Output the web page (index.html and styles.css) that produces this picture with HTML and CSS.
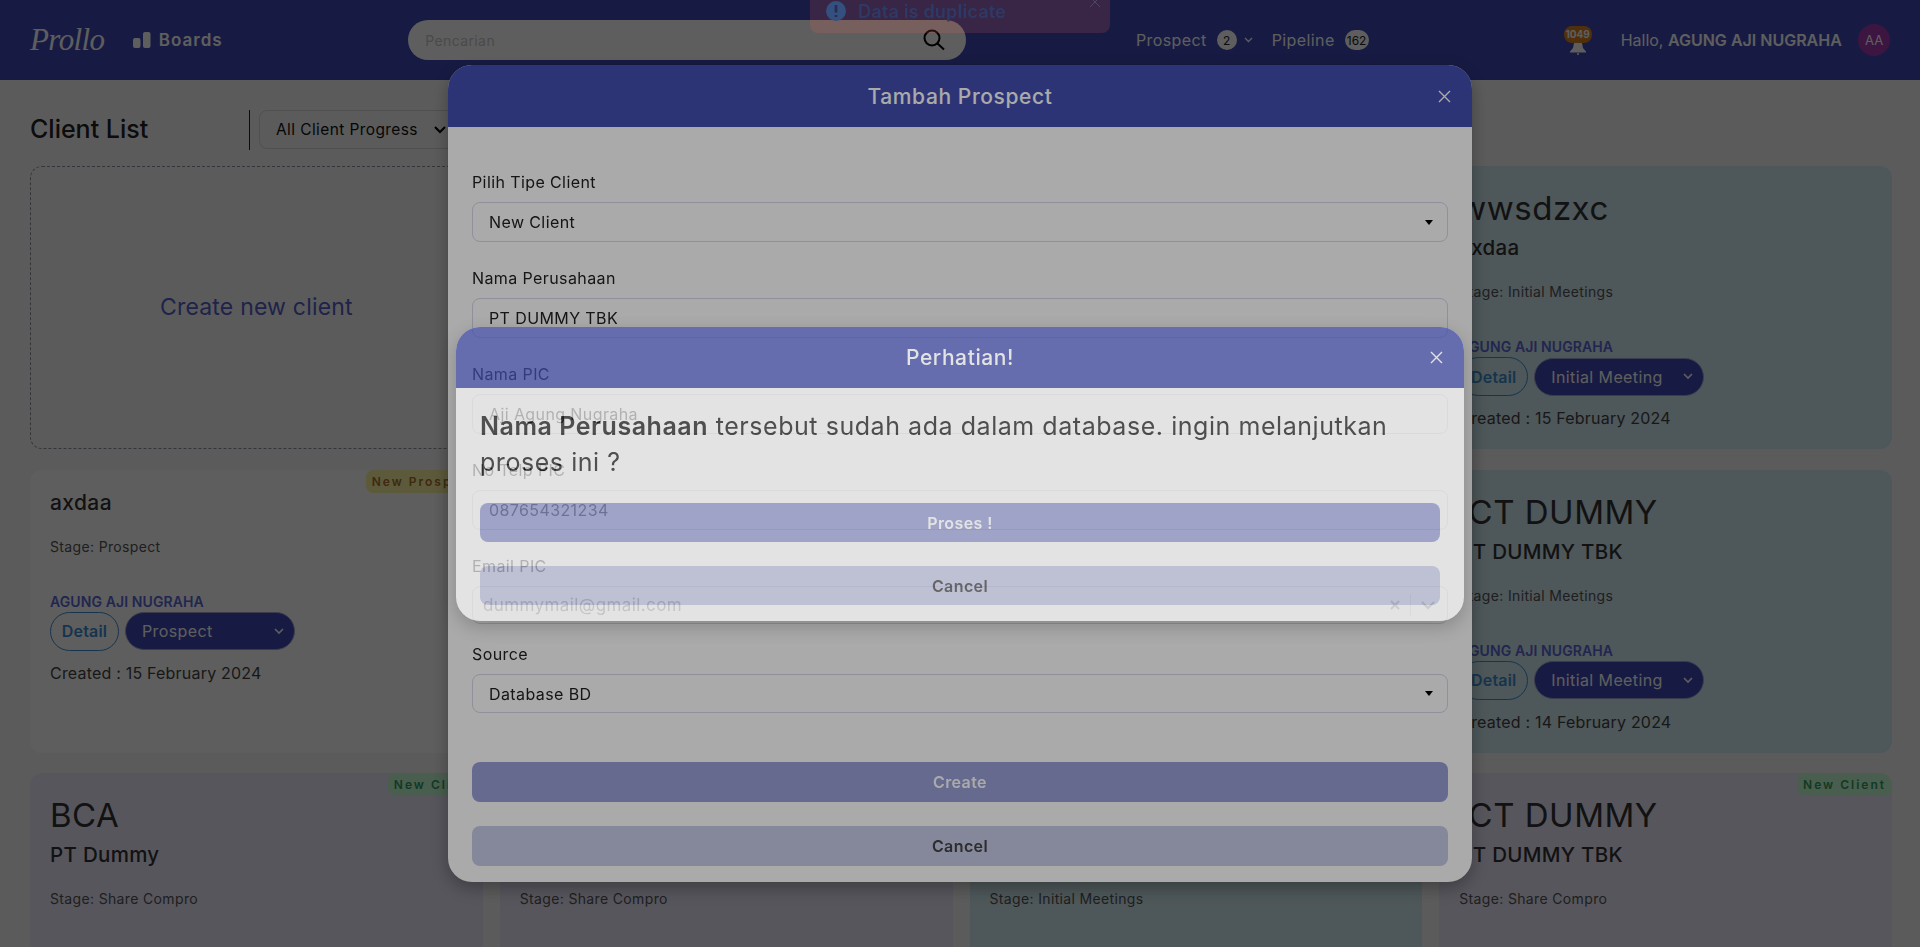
FILE: index.html

```html
<!DOCTYPE html>
<html lang="id">
<head>
	<meta charset="UTF-8">
	<title>Prollo - Client List</title>
	<link rel="stylesheet" href="styles.css">
</head>
<body>
	<nav class="navbar">
		<a class="logo">Prollo</a>
		<a class="nav_boards">
			<svg width="18" height="16" viewBox="0 0 18 16"><rect x="0" y="6" width="7.5" height="10" rx="2"/><rect x="10" y="0" width="7.5" height="16" rx="2"/></svg>
			Boards
		</a>
		<div class="search">
			<span class="search_text">Pencarian</span>
			<svg width="22" height="22" viewBox="0 0 22 22" fill="none" stroke="#000" stroke-width="2"><circle cx="9" cy="9" r="7.5"/><path d="M14.5 14.5 L21 20.5"/></svg>
		</div>
		<a class="nav_link">Prospect <span class="count">2</span>
			<svg class="nav_chev" width="9" height="6" viewBox="0 0 9 6" fill="none" stroke="#fff" stroke-width="1.3"><path d="M1 1 L4.5 4.5 L8 1"/></svg>
		</a>
		<a class="nav_link nav_pipeline">Pipeline <span class="count count_wide">162</span></a>
		<div class="bell">
			<span class="bell_count">1049</span>
			<svg width="18" height="12" viewBox="0 0 18 12" fill="#fff"><path d="M5 0 H13 L14 5 L17 8.5 V9.5 H1 V8.5 L4 5 Z"/><circle cx="9" cy="11" r="1"/></svg>
		</div>
		<div class="hello">Hallo, <b>AGUNG AJI NUGRAHA</b></div>
		<div class="avatar">AA</div>
	</nav>

	<main class="content">
		<div class="list_head">
			<h1 class="list_title">Client List</h1>
			<div class="filter">All Client Progress
				<svg width="12" height="8" viewBox="0 0 12 8" fill="none" stroke="#000" stroke-width="2"><path d="M1 1 L6 6 L11 1"/></svg>
			</div>
		</div>

		<div class="grid">
			<div class="card card_new">Create new client</div>
			<div class="card card_purple">
				<h2 class="card_title">BCA</h2>
				<h3 class="card_sub">PT Dummy</h3>
				<p class="card_stage">Stage: Share Compro</p>
			</div>
			<div class="card card_teal">
				<h2 class="card_title">ICT DUMMY</h2>
				<h3 class="card_sub">PT DUMMY TBK</h3>
				<p class="card_stage">Stage: Initial Meetings</p>
			</div>
			<div class="card card_teal">
				<h2 class="card_title">wwsdzxc</h2>
				<h3 class="card_sub">axdaa</h3>
				<p class="card_stage">Stage: Initial Meetings</p>
				<p class="card_owner">AGUNG AJI NUGRAHA</p>
				<div class="card_actions">
					<a class="btn_detail">Detail</a>
					<div class="stage_select">Initial Meeting
						<svg width="10" height="7" viewBox="0 0 10 7" fill="none" stroke="#fff" stroke-width="1.6"><path d="M1 1 L5 5 L9 1"/></svg>
					</div>
				</div>
				<p class="card_created">Created : 15 February 2024</p>
			</div>

			<div class="card card_plain">
				<span class="badge badge_prospect">New Prospect</span>
				<h3 class="card_name">axdaa</h3>
				<p class="card_stage">Stage: Prospect</p>
				<p class="card_owner">AGUNG AJI NUGRAHA</p>
				<div class="card_actions">
					<a class="btn_detail">Detail</a>
					<div class="stage_select">Prospect
						<svg width="10" height="7" viewBox="0 0 10 7" fill="none" stroke="#fff" stroke-width="1.6"><path d="M1 1 L5 5 L9 1"/></svg>
					</div>
				</div>
				<p class="card_created">Created : 15 February 2024</p>
			</div>
			<div class="card card_purple">
				<h2 class="card_title">BCA</h2>
				<h3 class="card_sub">PT Dummy</h3>
				<p class="card_stage">Stage: Share Compro</p>
			</div>
			<div class="card card_teal">
				<h2 class="card_title">ICT DUMMY</h2>
				<h3 class="card_sub">PT DUMMY TBK</h3>
				<p class="card_stage">Stage: Initial Meetings</p>
			</div>
			<div class="card card_teal">
				<h2 class="card_title">ICT DUMMY</h2>
				<h3 class="card_sub">PT DUMMY TBK</h3>
				<p class="card_stage">Stage: Initial Meetings</p>
				<p class="card_owner">AGUNG AJI NUGRAHA</p>
				<div class="card_actions">
					<a class="btn_detail">Detail</a>
					<div class="stage_select">Initial Meeting
						<svg width="10" height="7" viewBox="0 0 10 7" fill="none" stroke="#fff" stroke-width="1.6"><path d="M1 1 L5 5 L9 1"/></svg>
					</div>
				</div>
				<p class="card_created">Created : 14 February 2024</p>
			</div>

			<div class="card card_purple">
				<span class="badge badge_client">New Client</span>
				<h2 class="card_title">BCA</h2>
				<h3 class="card_sub">PT Dummy</h3>
				<p class="card_stage">Stage: Share Compro</p>
			</div>
			<div class="card card_purple">
				<h2 class="card_title">BCA</h2>
				<h3 class="card_sub">PT Dummy</h3>
				<p class="card_stage">Stage: Share Compro</p>
			</div>
			<div class="card card_teal">
				<h2 class="card_title">ICT DUMMY</h2>
				<h3 class="card_sub">PT DUMMY TBK</h3>
				<p class="card_stage">Stage: Initial Meetings</p>
			</div>
			<div class="card card_purple">
				<span class="badge badge_client">New Client</span>
				<h2 class="card_title">ICT DUMMY</h2>
				<h3 class="card_sub">PT DUMMY TBK</h3>
				<p class="card_stage">Stage: Share Compro</p>
			</div>
		</div>
	</main>

	<div class="backdrop backdrop_first"></div>

	<div class="modal modal_prospect">
		<div class="modal_head">
			<h4 class="modal_title">Tambah Prospect</h4>
			<svg class="modal_close" width="13" height="13" viewBox="0 0 13 13" stroke="#fff" stroke-width="1.4"><path d="M1 1 L12 12 M12 1 L1 12"/></svg>
		</div>
		<div class="modal_body">
			<label class="field_label">Pilih Tipe Client</label>
			<div class="field">New Client <i class="caret"></i></div>
			<label class="field_label">Nama Perusahaan</label>
			<div class="field">PT DUMMY TBK</div>
			<label class="field_label">Nama PIC</label>
			<div class="field">Aji Agung Nugraha</div>
			<label class="field_label">No Telp PIC</label>
			<div class="field">087654321234</div>
			<label class="field_label">Email PIC</label>
			<div class="field field_multi">
				<span>dummymail@gmail.com</span>
				<span class="multi_icons">
					<svg width="10" height="10" viewBox="0 0 10 10" stroke="#999" stroke-width="2"><path d="M1 1 L9 9 M9 1 L1 9"/></svg>
					<i class="multi_sep"></i>
					<svg width="14" height="9" viewBox="0 0 14 9" fill="none" stroke="#999" stroke-width="2"><path d="M1 1 L7 7 L13 1"/></svg>
				</span>
			</div>
			<label class="field_label">Source</label>
			<div class="field field_last">Database BD <i class="caret"></i></div>
			<a class="btn btn_main">Create</a>
			<a class="btn btn_soft">Cancel</a>
		</div>
	</div>

	<div class="backdrop backdrop_second"></div>

	<div class="modal modal_warn">
		<div class="modal_head modal_head_warn">
			<h4 class="modal_title">Perhatian!</h4>
			<svg class="modal_close" width="13" height="13" viewBox="0 0 13 13" stroke="#fff" stroke-width="1.4"><path d="M1 1 L12 12 M12 1 L1 12"/></svg>
		</div>
		<div class="warn_body">
			<p class="warn_text"><b>Nama Perusahaan</b> tersebut sudah ada dalam database. ingin melanjutkan proses ini ?</p>
			<a class="btn btn_main">Proses !</a>
			<a class="btn btn_soft">Cancel</a>
		</div>
	</div>

	<div class="toast">
		<svg width="20" height="20" viewBox="0 0 20 20"><circle cx="10" cy="10" r="10" fill="#33507f"/><path d="M10 4 V11.5 M10 14 V16" stroke="#2c2a50" stroke-width="2.6"/></svg>
		<span class="toast_text">Data is duplicate</span>
		<svg class="toast_close" width="10" height="10" viewBox="0 0 10 10" stroke="#4d4668" stroke-width="1"><path d="M0 0 L10 10 M10 0 L0 10"/></svg>
	</div>
</body>
</html>
```

FILE: styles.css

```css
/* base */
*{ margin:0; padding:0; box-sizing:border-box; }
html,body{ height:947px; overflow:hidden; }
body{ font-family:"Inter","Open Sans",sans-serif; font-size:16px; color:#333; background:#f7f7f7; letter-spacing:.4px; }
h1,h2,h3,h4{ font-weight:500; }
i{ font-style:normal; }

/* navbar */
.navbar{ height:80px; background:#3f49b4; color:#fff; display:flex; align-items:center; padding:0 30px; }
.logo{ font-family:"Liberation Serif",serif; font-style:italic; font-size:31px; letter-spacing:-.6px; width:103px; }
.nav_boards{ display:flex; align-items:center; gap:8px; font-size:17px; font-weight:600; letter-spacing:1px; width:276px; }
.nav_boards svg{ fill:#fff; }
.search{ width:559px; height:40px; border-radius:20px; background:#fff; display:flex; align-items:center; justify-content:space-between; padding:0 21px 0 17px; }
.search_text{ font-size:14px; color:#c8c8c8; }
.nav_link{ display:flex; align-items:center; gap:10px; margin-left:170px; font-size:16px; }
.nav_chev{ margin-left:-3px; }
.nav_pipeline{ margin-left:19px; }
.count{ width:20px; height:20px; border-radius:50%; background:#fff; color:#222; font-size:12px; display:flex; align-items:center; justify-content:center; letter-spacing:0; }
.count_wide{ width:24px; border-radius:10px; }
.bell{ display:flex; flex-direction:column; align-items:center; margin-left:195px; width:28px; }
.bell_count{ width:28px; height:17px; border-radius:8px; background:#d98020; font-size:10px; font-weight:700; letter-spacing:0; display:flex; align-items:center; justify-content:center; }
.hello{ margin-left:29px; width:238px; font-size:16px; letter-spacing:0; white-space:nowrap; }
.hello b{ font-weight:600; }
.avatar{ width:32px; height:32px; border-radius:50%; background:#a63bb0; font-size:13px; display:flex; align-items:center; justify-content:center; letter-spacing:0; }

/* list */
.content{ padding:30px 28px 0 30px; }
.list_head{ display:flex; height:40px; margin-bottom:16px; }
.list_title{ width:220px; font-size:25px; line-height:38px; color:#222; letter-spacing:0; border-right:1px solid #222; }
.filter{ width:400px; height:39px; margin-left:9px; border:1px solid #d8d8d8; border-radius:8px; padding-left:16px; font-size:15.5px; color:#111; display:flex; gap:16px; align-items:center; }
.grid{ display:grid; grid-template-columns:repeat(4,1fr); grid-auto-rows:283px; gap:20.5px 17px; }
.card{ position:relative; border-radius:12px; background:#fff; padding:19px 20px 20px; overflow:hidden; }
.card_purple{ background:#ebe8fb; }
.card_teal{ background:#d3ebf1; }
.card_plain{ padding-top:16px; }
.card_new{ background:none; border:1px dashed #8f8f9f; display:flex; align-items:center; justify-content:center; font-size:23px; color:#5560c8; letter-spacing:.2px; padding-left:0; padding-right:0; }
.card_title{ font-size:33px; line-height:46px; font-weight:400; letter-spacing:.5px; color:#333; white-space:nowrap; }
.card_sub{ font-size:20.5px; line-height:33px; font-weight:500; color:#333; letter-spacing:.3px; }
.card_name{ font-size:21px; line-height:33px; color:#333; }
.card_stage{ margin-top:17px; font-size:14px; line-height:21px; color:#555; letter-spacing:.35px; }
.card_owner{ margin-top:34px; font-size:14px; line-height:21px; font-weight:600; color:#5a68d8; letter-spacing:.1px; }
.card_actions{ display:flex; gap:6px; align-items:center; height:39px; }
.btn_detail{ width:69px; height:39px; border:1px solid #3d8fd0; border-radius:20px; display:flex; align-items:center; justify-content:center; font-size:16px; font-weight:600; color:#3d8fd0; letter-spacing:.2px; }
.stage_select{ width:170px; height:38px; border-radius:19px; background:#3f49b4; border:1px solid #a0a4cc; color:#fff; display:flex; align-items:center; justify-content:space-between; padding:0 10px 0 16px; font-size:16px; }
.card_created{ margin-top:10px; font-size:16px; line-height:24px; color:#444; letter-spacing:.2px; }
.badge{ position:absolute; top:0; right:0; height:23px; padding:0 6px; border-radius:7px; font-size:12px; font-weight:600; letter-spacing:2px; line-height:23px; }
.badge_prospect{ background:#fbf3a2; color:#a8722b; }
.badge_client{ background:#c8ffd8; color:#319d5c; }

/* modals */
.backdrop{ position:fixed; top:0; left:0; right:0; bottom:0; background:#000; }
.backdrop_first{ opacity:.445; }
.backdrop_second{ opacity:.333; }
.modal{ position:fixed; background:#fff; border-radius:24px; overflow:hidden; box-shadow:0 6px 18px rgba(0,0,0,.3); color:#111; }
.modal_prospect{ top:65px; left:448px; width:1024px; height:817px; }
.modal_warn{ top:327px; left:456px; width:1008px; height:294px; opacity:.667; }
.modal_head{ height:62px; background:#424fb2; display:flex; align-items:center; justify-content:center; position:relative; color:#fff; }
.modal_head_warn{ height:61px; }
.modal_title{ font-size:21px; font-weight:500; letter-spacing:.6px; }
.modal_close{ position:absolute; right:21px; top:25px; }
.modal_head_warn .modal_close{ top:24px; }
.modal_body{ padding:43px 24px 16px; }
.field_label{ display:block; height:24px; line-height:24px; font-size:16px; margin-bottom:8px; color:#222; }
.field{ height:40px; border:1px solid #d8d8ea; border-radius:8px; margin-bottom:24px; padding:0 16px; display:flex; align-items:center; justify-content:space-between; font-size:16px; color:#222; }
.field_multi{ height:38px; margin-bottom:18px; padding:0 12px 0 10px; color:#777; font-size:17px; }
.field_last{ height:39px; margin-bottom:49px; }
.multi_icons{ display:flex; align-items:center; gap:10px; }
.multi_sep{ width:1px; height:22px; background:#ddd; }
.caret{ width:0; height:0; border:4px solid transparent; border-top:5px solid #000; border-bottom:0; margin-right:-2px; }
.btn{ display:flex; align-items:center; justify-content:center; height:40px; border-radius:8px; font-size:16px; font-weight:600; margin-bottom:24px; }
.btn_main{ background:#99a0d6; color:#fff; }
.btn_soft{ background:#c8cbe8; color:#444; }
.warn_body{ padding:20px 24px 0; }
.warn_text{ font-size:25px; line-height:36px; color:#222; letter-spacing:.55px; margin-bottom:23px; }
.warn_text b{ font-weight:600; }
.warn_body .btn{ height:39px; }

/* toast sits over everything while it fades out */
.toast{ position:fixed; top:-11px; left:810px; width:300px; height:44px; border-radius:8px; background:rgba(255,100,80,.15); display:flex; align-items:center; padding:0 16px; gap:12px; }
.toast_text{ font-size:18px; font-weight:600; color:#2e3a66; letter-spacing:.2px; }
.toast_close{ position:absolute; right:10px; top:8px; }
```
